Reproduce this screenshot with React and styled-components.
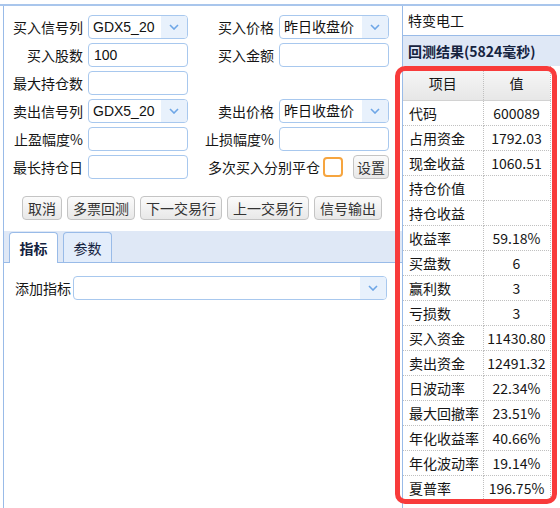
import styled, { createGlobalStyle } from 'styled-components';

const GlobalStyle = createGlobalStyle`
  html, body {
    margin: 0;
    padding: 0;
    background: #fff;
  }
  body {
    font-family: "Noto Sans CJK SC", sans-serif;
    font-size: 14px;
    color: #151515;
  }
`;

const Shell = styled.div`
  display: flex;
  height: 504px;
  margin-top: 4px;
  border-top: 2px solid #a9c6ec;
  box-sizing: border-box;
  overflow: hidden;
`;

const LeftPanel = styled.div`
  width: 398px;
  margin-left: 3px;
  border-left: 1px solid #99bbe8;
  display: flex;
  flex-direction: column;
`;

const FormGrid = styled.div`
  display: grid;
  grid-template-columns: 79px 100px 81px 110px;
  grid-auto-rows: 24px;
  column-gap: 5px;
  row-gap: 4px;
  padding-top: 9px;
  align-items: center;
`;

const Label = styled.label`
  text-align: right;
  white-space: nowrap;
  line-height: 24px;
`;

const TextField = styled.input`
  box-sizing: border-box;
  width: 100%;
  height: 24px;
  margin: 0;
  padding: 0 5px;
  border: 1px solid #a8c8ee;
  border-radius: 4px;
  background: #fff;
  font-family: "Liberation Sans", "Noto Sans CJK SC", sans-serif;
  font-size: 14px;
  color: #111;
  outline: none;
`;

const SelectBox = styled.div`
  box-sizing: border-box;
  display: flex;
  width: ${(p) => p.$width || '100%'};
  height: 24px;
  border: 1px solid #a8c8ee;
  border-radius: 4px;
  background: #fff;
  overflow: hidden;
`;

const SelectValue = styled.span`
  flex: 1;
  padding-left: 4px;
  line-height: 22px;
  font-family: "Liberation Sans", "Noto Sans CJK SC", sans-serif;
  font-size: 14px;
  color: #111;
  white-space: nowrap;
`;

const SelectArrow = styled.span`
  width: 26px;
  display: flex;
  align-items: center;
  justify-content: center;
  background: #e8f1fc;
`;

const CheckGroup = styled.div`
  grid-column: 3 / span 2;
  display: flex;
  justify-content: flex-end;
  align-items: center;
`;

const CheckBox = styled.span`
  box-sizing: border-box;
  width: 20px;
  height: 20px;
  margin: 0 10px 0 3px;
  border: 2px solid #f6a53f;
  border-radius: 4px;
  background: #fff;
`;

const Button = styled.button`
  box-sizing: border-box;
  height: 24px;
  margin: 0;
  padding: 0 ${(p) => (p.$compact ? '3px' : '5px')};
  border: 1px solid #c4c4c4;
  border-radius: 4px;
  background: linear-gradient(#fbfbfb, #e8e8e8);
  font-family: "Noto Sans CJK SC", sans-serif;
  font-size: 14px;
  line-height: 22px;
  color: #333;
  white-space: nowrap;
`;

const ButtonRow = styled.div`
  display: flex;
  gap: 5px;
  margin-top: 17px;
  padding-left: 18px;
`;

const TabBar = styled.div`
  display: flex;
  align-items: flex-end;
  gap: 5px;
  height: 32px;
  margin-top: 11px;
  padding-left: 5px;
  box-sizing: border-box;
  background: #dfe8f6;
  border-bottom: 1px solid #99bbe8;
`;

const Tab = styled.div`
  box-sizing: border-box;
  width: 49px;
  height: ${(p) => (p.$active ? '31px' : '30px')};
  margin-bottom: ${(p) => (p.$active ? '-1px' : '0')};
  border: 1px solid #99bbe8;
  border-bottom: none;
  border-radius: 4px 4px 0 0;
  background: ${(p) => (p.$active ? '#fff' : '#e3edfb')};
  font-weight: ${(p) => (p.$active ? 'bold' : 'normal')};
  text-align: center;
  line-height: 30px;
  color: #15233f;
`;

const IndicatorRow = styled.div`
  display: flex;
  align-items: center;
  gap: 2px;
  margin-top: 13px;
  padding-left: 11px;
`;

const RightPanel = styled.div`
  position: relative;
  flex: 1;
  border-left: 1px solid #99bbe8;
  display: flex;
  flex-direction: column;
`;

const StockName = styled.div`
  height: 29px;
  line-height: 29px;
  padding-left: 5px;
  border-bottom: 1px solid #99bbe8;
`;

const ResultHeader = styled.div`
  height: 30px;
  line-height: 30px;
  padding-left: 5px;
  background: #dfe8f6;
  font-weight: bold;
  color: #15233f;
  white-space: nowrap;
`;

const ResultTable = styled.table`
  width: 147px;
  border-collapse: collapse;
  table-layout: fixed;
  font-size: 14px;

  th {
    height: 34px;
    padding: 0;
    font-weight: normal;
    background: linear-gradient(#f8f8f8, #e7e7e7);
    border-bottom: 1px solid #d2d2d2;
    border-right: 1px dotted #c0c0c0;
  }

  td {
    height: 24px;
    padding: 0;
    border-bottom: 1px dotted #c0c0c0;
    border-right: 1px dotted #c0c0c0;
    white-space: nowrap;
  }
`;

const NameCell = styled.td`
  padding-left: 6px !important;
  text-align: left;
`;

const ValueCell = styled.td`
  text-align: center;
`;

// red frame drawn over the result table
const Highlight = styled.div`
  position: absolute;
  left: -8px;
  top: 60px;
  width: 162px;
  height: 438px;
  box-sizing: border-box;
  border: 5px solid #f83b3b;
  border-radius: 10px;
  pointer-events: none;
`;

const Chevron = () => (
  <svg width="10" height="6" viewBox="0 0 10 6">
    <path d="M1 1l4 4 4-4" fill="none" stroke="#6ea6e6" strokeWidth="1.6" />
  </svg>
);

const Select = ({ value, width }) => (
  <SelectBox $width={width}>
    <SelectValue>{value}</SelectValue>
    <SelectArrow>
      <Chevron />
    </SelectArrow>
  </SelectBox>
);

const results = [
  ['代码', '600089'],
  ['占用资金', '1792.03'],
  ['现金收益', '1060.51'],
  ['持仓价值', ''],
  ['持仓收益', ''],
  ['收益率', '59.18%'],
  ['买盘数', '6'],
  ['赢利数', '3'],
  ['亏损数', '3'],
  ['买入资金', '11430.80'],
  ['卖出资金', '12491.32'],
  ['日波动率', '22.34%'],
  ['最大回撤率', '23.51%'],
  ['年化收益率', '40.66%'],
  ['年化波动率', '19.14%'],
  ['夏普率', '196.75%'],
];

const actions = ['取消', '多票回测', '下一交易行', '上一交易行', '信号输出'];

export default function App() {
  return (
    <>
      <GlobalStyle />
      <Shell>
        <LeftPanel>
          <FormGrid>
            <Label>买入信号列</Label>
            <Select value="GDX5_20" />
            <Label>买入价格</Label>
            <Select value="昨日收盘价" />

            <Label>买入股数</Label>
            <TextField defaultValue="100" />
            <Label>买入金额</Label>
            <TextField />

            <Label>最大持仓数</Label>
            <TextField />
            <span />
            <span />

            <Label>卖出信号列</Label>
            <Select value="GDX5_20" />
            <Label>卖出价格</Label>
            <Select value="昨日收盘价" />

            <Label>止盈幅度%</Label>
            <TextField />
            <Label>止损幅度%</Label>
            <TextField />

            <Label>最长持仓日</Label>
            <TextField />
            <CheckGroup>
              <Label>多次买入分别平仓</Label>
              <CheckBox />
              <Button $compact>设置</Button>
            </CheckGroup>
          </FormGrid>

          <ButtonRow>
            {actions.map((a) => (
              <Button key={a}>{a}</Button>
            ))}
          </ButtonRow>

          <TabBar>
            <Tab $active>指标</Tab>
            <Tab>参数</Tab>
          </TabBar>

          <IndicatorRow>
            <Label>添加指标</Label>
            <Select value="" width="314px" />
          </IndicatorRow>
        </LeftPanel>

        <RightPanel>
          <StockName>特变电工</StockName>
          <ResultHeader>回测结果(5824毫秒)</ResultHeader>
          <ResultTable>
            <colgroup>
              <col style={{ width: 80 }} />
              <col style={{ width: 67 }} />
            </colgroup>
            <thead>
              <tr>
                <th>项目</th>
                <th>值</th>
              </tr>
            </thead>
            <tbody>
              {results.map(([name, value]) => (
                <tr key={name}>
                  <NameCell>{name}</NameCell>
                  <ValueCell>{value}</ValueCell>
                </tr>
              ))}
            </tbody>
          </ResultTable>
          <Highlight />
        </RightPanel>
      </Shell>
    </>
  );
}
